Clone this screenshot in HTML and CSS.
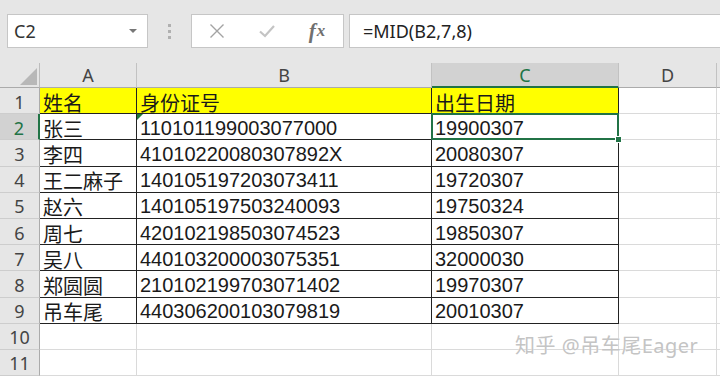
FILE: index.html
```html
<!DOCTYPE html>
<html lang="zh-CN">

<head>
  <meta charset="UTF-8">
  <title>MID 提取出生日期</title>
  <link rel="stylesheet" href="styles.css">
</head>

<body>
  <div class="sheet">
    <div class="toolbar">
      <div class="namebox">
        <span>C2</span>
        <span class="arrow"></span>
      </div>
      <div class="grip"><i></i><i></i><i></i></div>
      <div class="fxbox">
        <span class="slot">
          <svg width="16" height="16" viewBox="0 0 16 16"><path d="M1.5 1.5L14.5 14.5M14.5 1.5L1.5 14.5" stroke="#a3a3a3" stroke-width="1.4" fill="none"/></svg>
        </span>
        <span class="slot">
          <svg width="18" height="16" viewBox="0 0 18 16"><path d="M2 8.5L7 13L16 3" stroke="#c4c4c4" stroke-width="2.2" fill="none"/></svg>
        </span>
        <span class="slot fx"><i>f</i><i class="x">x</i></span>
      </div>
      <div class="formula">=MID(B2,7,8)</div>
    </div>

    <div class="grid">
      <div class="corner">
        <svg width="39" height="24" viewBox="0 0 39 24"><path d="M37 5V22H20Z" fill="#b8b8b8"/></svg>
      </div>
      <div class="colhead">A</div>
      <div class="colhead">B</div>
      <div class="colhead active">C</div>
      <div class="colhead">D</div>
      <div class="colhead"></div>

      <div class="rowhead">1</div>
      <div class="cell t head">姓名</div>
      <div class="cell t head">身份证号</div>
      <div class="cell t head">出生日期</div>
      <div class="cell"></div>
      <div class="cell"></div>

      <div class="rowhead active">2</div>
      <div class="cell t">张三</div>
      <div class="cell t flag">110101199003077000</div>
      <div class="cell t sel">19900307</div>
      <div class="cell"></div>
      <div class="cell"></div>

      <div class="rowhead">3</div>
      <div class="cell t">李四</div>
      <div class="cell t">41010220080307892X</div>
      <div class="cell t">20080307</div>
      <div class="cell"></div>
      <div class="cell"></div>

      <div class="rowhead">4</div>
      <div class="cell t">王二麻子</div>
      <div class="cell t">140105197203073411</div>
      <div class="cell t">19720307</div>
      <div class="cell"></div>
      <div class="cell"></div>

      <div class="rowhead">5</div>
      <div class="cell t">赵六</div>
      <div class="cell t">140105197503240093</div>
      <div class="cell t">19750324</div>
      <div class="cell"></div>
      <div class="cell"></div>

      <div class="rowhead">6</div>
      <div class="cell t">周七</div>
      <div class="cell t">420102198503074523</div>
      <div class="cell t">19850307</div>
      <div class="cell"></div>
      <div class="cell"></div>

      <div class="rowhead">7</div>
      <div class="cell t">吴八</div>
      <div class="cell t">440103200003075351</div>
      <div class="cell t">32000030</div>
      <div class="cell"></div>
      <div class="cell"></div>

      <div class="rowhead">8</div>
      <div class="cell t">郑圆圆</div>
      <div class="cell t">210102199703071402</div>
      <div class="cell t">19970307</div>
      <div class="cell"></div>
      <div class="cell"></div>

      <div class="rowhead">9</div>
      <div class="cell t">吊车尾</div>
      <div class="cell t">440306200103079819</div>
      <div class="cell t">20010307</div>
      <div class="cell"></div>
      <div class="cell"></div>

      <div class="rowhead">10</div>
      <div class="cell"></div>
      <div class="cell"></div>
      <div class="cell"></div>
      <div class="cell"></div>
      <div class="cell"></div>

      <div class="rowhead">11</div>
      <div class="cell"></div>
      <div class="cell"></div>
      <div class="cell"></div>
      <div class="cell"></div>
      <div class="cell"></div>
    </div>

    <div class="watermark">知乎 @吊车尾Eager</div>
  </div>
</body>

</html>
```

FILE: styles.css
```css
* {
  box-sizing: border-box;
  padding: 0;
  margin: 0;
}

html,
body {
  height: 100%;
  overflow: hidden;
}

body {
  background: #fff;
  font-family: 'Noto Sans', 'Noto Sans CJK SC', sans-serif;
  color: #222;
}

.sheet {
  position: relative;
  height: 100%;
}

/* 编辑栏 */
.toolbar {
  display: flex;
  height: 63px;
  padding-top: 14px;
  background: #e6e6e6;
}

.toolbar .namebox {
  display: flex;
  align-items: center;
  justify-content: space-between;
  width: 141px;
  height: 34px;
  margin-left: 7px;
  padding: 0 10px 0 6px;
  background: #fff;
  border: 1px solid #c6c6c6;
  font-size: 18px;
  color: #333;
}

.toolbar .namebox .arrow {
  width: 0;
  height: 0;
  border-left: 4px solid transparent;
  border-right: 4px solid transparent;
  border-top: 4px solid #777;
}

.toolbar .grip {
  display: flex;
  flex-direction: column;
  align-items: center;
  justify-content: center;
  gap: 3px;
  width: 43px;
  height: 34px;
}

.toolbar .grip i {
  width: 3px;
  height: 3px;
  background: #b0b0b0;
}

.toolbar .fxbox {
  display: flex;
  width: 153px;
  height: 34px;
  background: #fff;
  border: 1px solid #c6c6c6;
}

.toolbar .fxbox .slot {
  display: flex;
  align-items: center;
  justify-content: center;
  width: 50px;
}

.toolbar .fxbox .fx {
  font-family: 'Liberation Serif', serif;
  font-style: italic;
  font-weight: bold;
  font-size: 21px;
  color: #707070;
}

.toolbar .fxbox .fx .x {
  font-size: 17px;
  margin-left: 1px;
}

.toolbar .formula {
  display: flex;
  align-items: center;
  flex: 1;
  height: 34px;
  margin-left: 5px;
  padding-left: 13px;
  background: #fff;
  border: 1px solid #c6c6c6;
  border-right: none;
  font-size: 18px;
  color: #222;
}

/* 表格 */
.grid {
  display: grid;
  grid-template-columns: 40px 97px 295px 187px 98px 1fr;
  grid-template-rows: 25px repeat(11, 26.2px);
}

.corner,
.colhead,
.rowhead {
  background: #e6e6e6;
  color: #444;
  font-size: 18px;
}

.corner {
  border-right: 1px solid #bdbdbd;
  border-bottom: 1px solid #ababab;
}

.colhead {
  display: flex;
  align-items: center;
  justify-content: center;
  border-right: 1px solid #c2c2c2;
  border-bottom: 1px solid #ababab;
}

.colhead.active {
  background: #d2d2d2;
  color: #217346;
  border-bottom: 2px solid #217346;
}

.rowhead {
  display: flex;
  align-items: center;
  justify-content: center;
  padding-top: 2px;
  border-right: 1px solid #ababab;
  border-bottom: 1px solid #cdcdcd;
}

.rowhead.active {
  background: #d2d2d2;
  color: #217346;
  border-right: 2px solid #217346;
}

.cell {
  display: flex;
  align-items: center;
  padding: 3px 0 0 3px;
  border-right: 1px solid #dadada;
  border-bottom: 1px solid #dadada;
  font-family: 'Liberation Sans', 'Noto Sans CJK SC', sans-serif;
  font-size: 20px;
  color: #1a1a1a;
  white-space: nowrap;
  overflow: hidden;
}

.cell.t {
  border-right-color: #222;
  border-bottom-color: #222;
}

.cell.head {
  background: #ffff00;
}

.cell.flag {
  position: relative;
}

.cell.flag::before {
  content: '';
  position: absolute;
  top: 0;
  left: 0;
  border-top: 6px solid #1e7a3c;
  border-right: 6px solid transparent;
}

.cell.sel {
  position: relative;
  overflow: visible;
  z-index: 1;
}

.cell.sel::after {
  content: '';
  position: absolute;
  top: -1px;
  left: -1px;
  right: -1px;
  bottom: -1px;
  border: 2px solid #217346;
}

.cell.sel::before {
  content: '';
  position: absolute;
  right: -4px;
  bottom: -4px;
  width: 5px;
  height: 5px;
  background: #217346;
  border: 1px solid #fff;
  z-index: 2;
}

.watermark {
  position: absolute;
  left: 515px;
  top: 330px;
  font-family: 'Noto Sans', 'Noto Sans CJK SC', sans-serif;
  font-size: 20px;
  color: #c4c4c4;
  text-shadow: 0 0 1px rgba(255, 255, 255, .9);
  letter-spacing: 0.5px;
}
```
